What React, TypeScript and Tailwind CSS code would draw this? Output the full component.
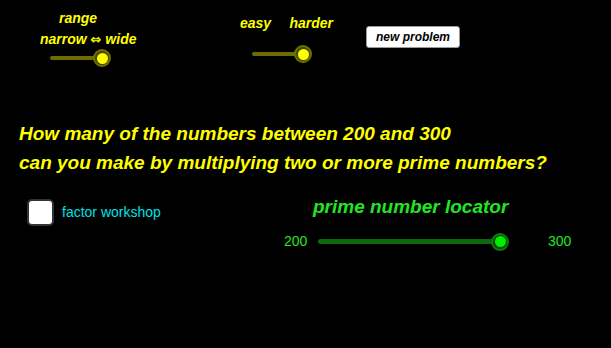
import type { ReactNode } from "react";

type SliderProps = {
  trackClass: string;
  trackWidth: string;
  ringClass: string;
  dotClass: string;
};

function Slider({ trackClass, trackWidth, ringClass, dotClass }: SliderProps) {
  return (
    <div className="flex h-[18px] items-center">
      <div className={`rounded-full ${trackWidth} ${trackClass}`} />
      <div
        className={`-ml-[9px] flex h-[18px] w-[18px] items-center justify-center rounded-full ${ringClass}`}
      >
        <div className={`h-[11px] w-[11px] shrink-0 rounded-full ${dotClass}`} />
      </div>
    </div>
  );
}

function Label({ children, className = "" }: { children: ReactNode; className?: string }) {
  return (
    <div className={`text-[14px] font-bold italic leading-[18px] text-[#ffff00] ${className}`}>
      {children}
    </div>
  );
}

const yellowTrack = "h-[4px] bg-[#6e6e00]";
const yellowRing = "bg-[#454500] border-2 border-[#707000]";
const yellowDot = "bg-[#ffff00]";

export default function App() {
  return (
    <div className="h-[348px] w-[611px] overflow-hidden bg-black font-['Liberation_Sans',Arial,sans-serif]">
      <div className="flex items-start pt-[9px]">
        <div className="ml-[40px] w-[97px]">
          <Label className="ml-[19px]">range</Label>
          <Label className="mt-[3px] whitespace-nowrap">
            narrow <span className="font-['DejaVu_Sans',sans-serif] text-[13px] not-italic">⇔</span> wide
          </Label>
          <div className="ml-[10px]">
            <Slider
              trackClass={yellowTrack}
              trackWidth="w-[52px]"
              ringClass={yellowRing}
              dotClass={yellowDot}
            />
          </div>
        </div>

        <div className="ml-[103px] w-[93px] pt-[5px]">
          <div className="flex justify-between">
            <Label>easy</Label>
            <Label>harder</Label>
          </div>
          <div className="ml-[12px] mt-[13px]">
            <Slider
              trackClass={yellowTrack}
              trackWidth="w-[51px]"
              ringClass={yellowRing}
              dotClass={yellowDot}
            />
          </div>
        </div>

        <button
          className="ml-[33px] mt-[17px] h-[22px] w-[94px] rounded-[3px] border border-[#9a9a9a] bg-white text-[12px] font-bold italic text-black"
          type="button"
        >
          new problem
        </button>
      </div>

      <div className="ml-[19px] mt-[52px] text-[19px] font-bold italic leading-[29px] text-[#ffff00]">
        <p>How many of the numbers between 200 and 300</p>
        <p>can you make by multiplying two or more prime numbers?</p>
      </div>

      <div className="flex items-start">
        <div className="flex w-[284px] items-center pl-[27px] pt-[22px]">
          <div className="h-[27px] w-[27px] rounded-[5px] border-2 border-[#333333] bg-white" />
          <span className="ml-[8px] text-[14px] text-[#00e1e6]">factor workshop</span>
        </div>

        <div className="pt-[18px]">
          <div className="ml-[29px] text-[19px] font-bold italic leading-[24px] text-[#22e622]">
            prime number locator
          </div>
          <div className="mt-[12px] flex items-center text-[14px] text-[#22e622]">
            <span className="w-[34px]">200</span>
            <Slider
              trackClass="h-[5px] bg-[#0b6a0b]"
              trackWidth="w-[182px]"
              ringClass="bg-[#084a08] border-2 border-[#137a13]"
              dotClass="bg-[#00ee00]"
            />
            <span className="ml-[39px]">300</span>
          </div>
        </div>
      </div>
    </div>
  );
}
